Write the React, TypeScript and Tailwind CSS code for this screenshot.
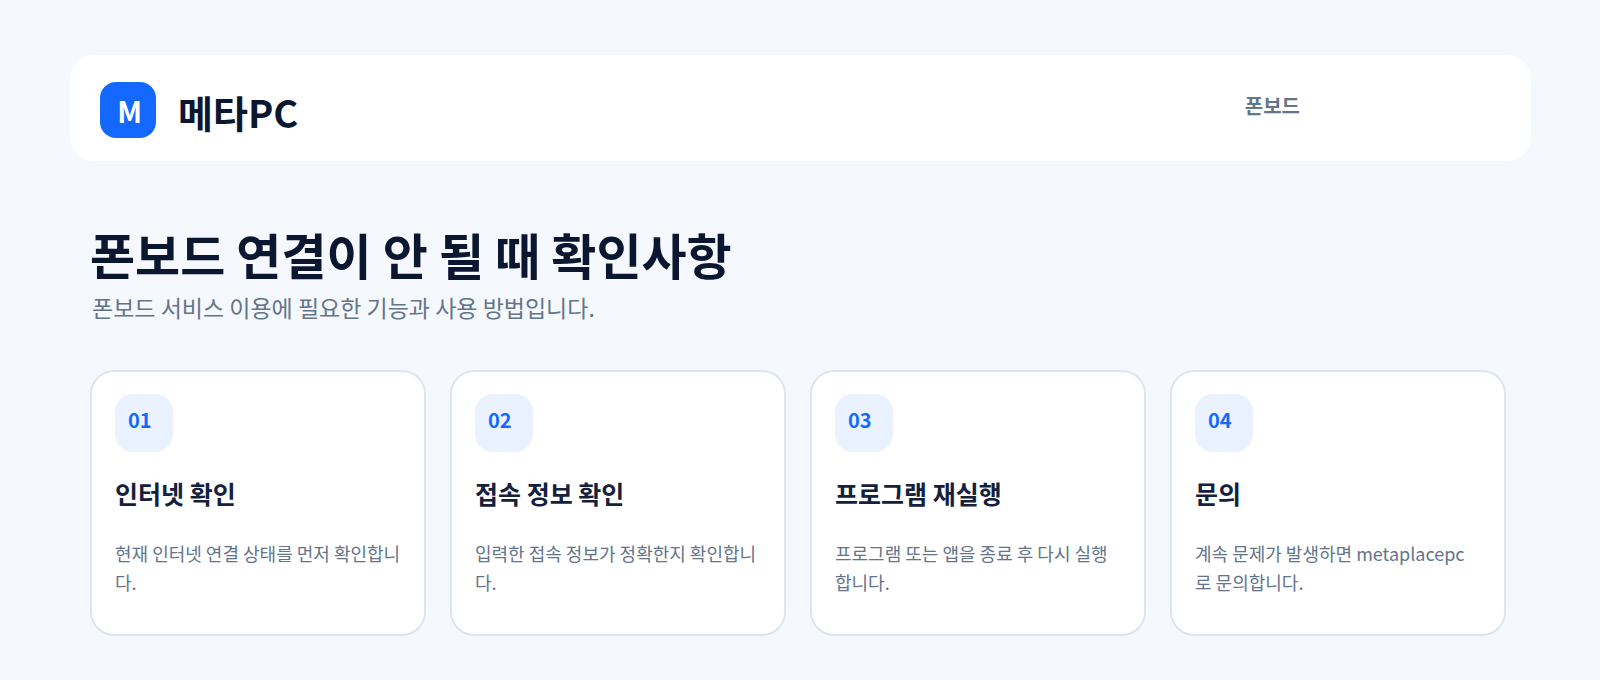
const STEPS = [
  { no: "01", title: "인터넷 확인", body: "현재 인터넷 연결 상태를 먼저 확인합니다." },
  { no: "02", title: "접속 정보 확인", body: "입력한 접속 정보가 정확한지 확인합니다." },
  { no: "03", title: "프로그램 재실행", body: "프로그램 또는 앱을 종료 후 다시 실행합니다." },
  { no: "04", title: "문의", body: "계속 문제가 발생하면 metaplacepc로 문의합니다." },
];

function Header() {
  return (
    <header className="flex items-start justify-between rounded-3xl bg-white pt-[27px] pb-[23px] pl-[30px] pr-[231px]">
      <div className="flex items-start gap-[22px]">
        <span className="flex size-14 items-center justify-center rounded-2xl bg-[#1468ff] pt-0.5 pl-[3px] text-[29px] font-bold text-white">
          M
        </span>
        <span className="pt-1 text-[38px] leading-[52px] font-bold text-[#0b1730]">
          메타PC
        </span>
      </div>
      <nav className="pt-[9px]">
        <a href="#phoneboard" className="block text-[20px] leading-[30px] font-bold text-[#64748b]">
          폰보드
        </a>
      </nav>
    </header>
  );
}

export default function App() {
  return (
    <div className="min-h-screen bg-[#f5f8fd] pt-[55px] pr-[69px] pb-11 pl-[70px] font-['Noto_Sans_CJK_KR',sans-serif]">
      <Header />

      <main className="pt-[57px] pr-[25px] pl-5">
        <h1 className="text-[49px] leading-[72px] font-bold text-[#0b1730]">
          폰보드 연결이 안 될 때 확인사항
        </h1>
        <p className="mt-px pl-0.5 text-[23px] leading-[32px] text-[#64748b]">
          폰보드 서비스 이용에 필요한 기능과 사용 방법입니다.
        </p>

        <section className="mt-[47px] grid grid-cols-4 gap-6">
          {STEPS.map((step) => (
            <article
              key={step.no}
              className="rounded-3xl border-2 border-[#dce5f1] bg-white px-[23px] pt-[22px] pb-[37px]"
            >
              <div className="size-[58px] rounded-[18px] bg-[#eaf2ff] pt-3 pl-[13px] text-[20px] leading-[28px] font-bold text-[#1468ff]">
                {step.no}
              </div>
              <h2 className="mt-[23px] text-[25px] leading-[36px] font-bold text-[#14213d]">
                {step.title}
              </h2>
              <p className="mt-[28px] text-[18px] leading-[29px] text-[#64748b]">
                {step.body}
              </p>
            </article>
          ))}
        </section>
      </main>
    </div>
  );
}
